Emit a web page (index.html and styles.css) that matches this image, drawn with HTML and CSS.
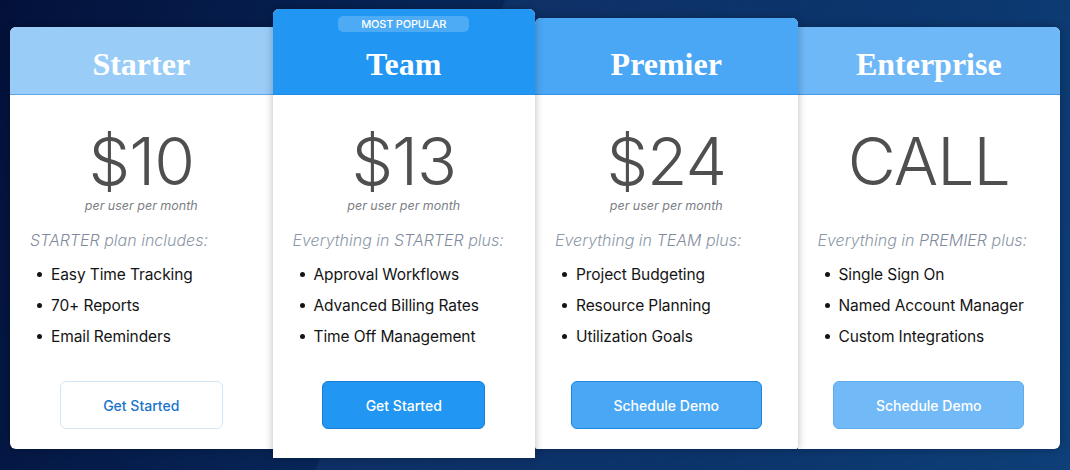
FILE: index.html
```html
<!DOCTYPE html>
<html lang="en">
<head>
<meta charset="utf-8">
<title>Pricing</title>
<link rel="stylesheet" href="styles.css">
</head>
<body>
<main class="plans">
  <section class="card starter">
    <header class="head"><h2 class="title">Starter</h2></header>
    <div class="body">
      <div class="price">$10</div>
      <div class="per">per user per month</div>
      <p class="includes"><span class="plan">STARTER</span> plan includes:</p>
      <ul class="features">
        <li>Easy Time Tracking</li>
        <li>70+ Reports</li>
        <li>Email Reminders</li>
      </ul>
      <a class="btn btn-outline btn-narrow" href="#">Get Started</a>
    </div>
  </section>
  <section class="card team">
    <header class="head">
      <div class="badge">MOST POPULAR</div>
      <h2 class="title">Team</h2>
    </header>
    <div class="body">
      <div class="price">$13</div>
      <div class="per">per user per month</div>
      <p class="includes">Everything in <span class="plan">STARTER</span> plus:</p>
      <ul class="features">
        <li>Approval Workflows</li>
        <li>Advanced Billing Rates</li>
        <li>Time Off Management</li>
      </ul>
      <a class="btn btn-team btn-narrow" href="#">Get Started</a>
    </div>
  </section>
  <section class="card premier">
    <header class="head"><h2 class="title">Premier</h2></header>
    <div class="body">
      <div class="price">$24</div>
      <div class="per">per user per month</div>
      <p class="includes">Everything in <span class="plan">TEAM</span> plus:</p>
      <ul class="features">
        <li>Project Budgeting</li>
        <li>Resource Planning</li>
        <li>Utilization Goals</li>
      </ul>
      <a class="btn btn-premier btn-wide" href="#">Schedule Demo</a>
    </div>
  </section>
  <section class="card enterprise">
    <header class="head"><h2 class="title">Enterprise</h2></header>
    <div class="body">
      <div class="price">CALL</div>
      <div class="per">&nbsp;</div>
      <p class="includes">Everything in <span class="plan">PREMIER</span> plus:</p>
      <ul class="features">
        <li>Single Sign On</li>
        <li>Named Account Manager</li>
        <li>Custom Integrations</li>
      </ul>
      <a class="btn btn-enterprise btn-wide" href="#">Schedule Demo</a>
    </div>
  </section>
</main>
</body>
</html>
```
FILE: styles.css
```css
* { box-sizing: border-box; }
html, body { margin: 0; height: 100%; }
body {
  width: 1070px;
  height: 470px;
  overflow: hidden;
  font-family: Inter, "Noto Sans", sans-serif;
  background:
    linear-gradient(112deg, rgba(255,255,255,0) 0%, rgba(255,255,255,0) 40%, rgba(50,100,170,0.16) 40.2%, rgba(50,100,170,0.0) 72%),
    linear-gradient(108deg, #03113a 0%, #072456 35%, #0a3066 60%, #0e3f78 100%);
}
.plans {
  display: flex;
  align-items: flex-start;
  padding: 9px 10px 0 10px;
}
.card {
  flex: 1 1 0;
  display: flex;
  flex-direction: column;
  background: #fff;
  position: relative;
  box-shadow: 0 0 9px rgba(0,0,0,0.28);
}
.starter { margin-top: 18px; border-radius: 6px 0 0 6px; z-index: 1; }
.team { border-radius: 6px 6px 0 0; z-index: 3; }
.premier { margin-top: 9px; border-radius: 6px 6px 2px 2px; z-index: 2; }
.enterprise { margin-top: 18px; border-radius: 0 6px 6px 0; z-index: 1; }

.head {
  display: flex;
  flex-direction: column;
  align-items: center;
  padding: 17px 0 10px;
  border-bottom: 1px solid rgba(30,120,215,0.45);
  border-radius: inherit;
  border-bottom-left-radius: 0;
  border-bottom-right-radius: 0;
}
.starter .head { background: #99cdf8; }
.team .head { background: #2196f3; padding-top: 7px; }
.premier .head { background: #4aa7f5; padding-top: 26px; }
.enterprise .head { background: #6fb8f7; }

.title {
  margin: 0;
  font-family: "Liberation Serif", "Times New Roman", serif;
  font-weight: 700;
  font-size: 32px;
  line-height: 40px;
  color: #fff;
}
.badge {
  width: 131px;
  height: 16px;
  margin-bottom: 12px;
  border-radius: 5px;
  background: rgba(255,255,255,0.2);
  color: #fff;
  font-size: 11px;
  font-weight: 500;
  line-height: 16px;
  text-align: center;
  letter-spacing: -0.2px;
}

.body {
  display: flex;
  flex-direction: column;
  padding: 36px 20px 20px;
}
.team .body { padding-bottom: 29px; }
.price {
  text-align: center;
  font-size: 66px;
  font-weight: 300;
  line-height: 60px;
  color: #4f4f4f;
  letter-spacing: -1px;
}
.per {
  margin-top: 7px;
  text-align: center;
  font-size: 12.5px;
  line-height: 16px;
  font-style: italic;
  color: #7b7f86;
}
.includes {
  margin: 14px 0 0;
  font-size: 16px;
  line-height: 24px;
  font-style: italic;
  font-weight: 300;
  color: #8c98a8;
  white-space: nowrap;
}
.plan { color: #7f8b9d; }
.features {
  list-style: none;
  margin: 7px 0 0;
  padding: 0;
}
.features li {
  display: flex;
  align-items: center;
  gap: 9px;
  height: 31px;
  font-size: 15.5px;
  letter-spacing: -0.1px;
  color: #141414;
  white-space: nowrap;
}
.features li::before {
  content: "";
  flex: none;
  width: 5px;
  height: 5px;
  margin-left: 7px;
  border-radius: 50%;
  background: #141414;
}
.btn {
  align-self: center;
  margin-top: 29px;
  height: 48px;
  display: flex;
  align-items: center;
  justify-content: center;
  border-radius: 6px;
  font-size: 14px;
  font-weight: 500;
  text-decoration: none;
  color: #fff;
  border: 1.5px solid transparent;
}
.btn-narrow { width: 163px; }
.btn-wide { width: 191px; }
.btn-outline { background: #fff; border-color: #d3e6f8; color: #1a74cc; }
.btn-team { background: #2196f3; border-color: #167ed8; }
.btn-premier { background: #4aa7f5; border-color: #1d87dd; }
.btn-enterprise { background: #72baf7; border-color: #5eabef; }
```
